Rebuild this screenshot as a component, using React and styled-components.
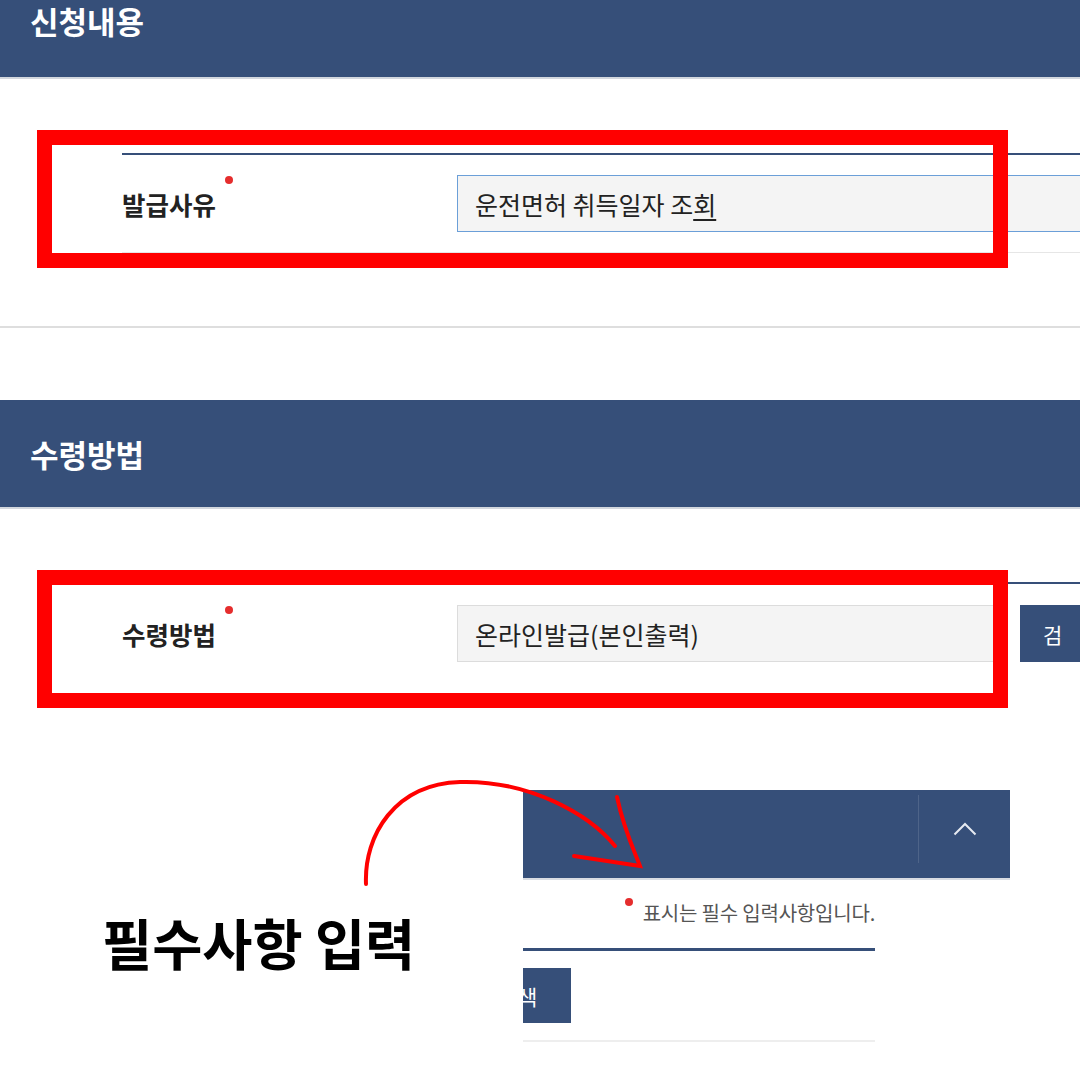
import React from "react";
import styled, { createGlobalStyle } from "styled-components";

const navy = "#364f79";

const GlobalStyle = createGlobalStyle`
  html, body {
    margin: 0;
    padding: 0;
    background: #fff;
    overflow: hidden;
  }
  body {
    font-family: "Noto Sans CJK KR", "Noto Sans", sans-serif;
  }
  * { box-sizing: border-box; }
`;

const Page = styled.div`
  position: relative;
  width: 1080px;
  height: 1080px;
  overflow: hidden;
`;

const Bar = styled.div`
  height: ${(p) => p.$h}px;
  margin-top: ${(p) => p.$mt || 0}px;
  background: ${navy};
  border-bottom: 2px solid #d3d7de;
  box-sizing: content-box;
  padding-left: 30px;
  display: flex;
  align-items: ${(p) => (p.$top ? "flex-start" : "center")};
`;

const Title = styled.h2`
  margin: 0;
  color: #fff;
  font-size: 31px;
  font-weight: 700;
  line-height: 42px;
`;

const Section = styled.section`
  padding: ${(p) => p.$pt}px 0 ${(p) => p.$pb}px 122px;
  border-bottom: ${(p) => (p.$line ? "2px solid #dedede" : "none")};
`;

const Row = styled.div`
  position: relative;
  display: flex;
  align-items: center;
  padding: ${(p) => p.$pt}px 0 ${(p) => p.$pb}px;
  border-top: 2px solid ${navy};
  border-bottom: ${(p) => (p.$bottom ? "1px solid #e6e6e6" : "none")};
`;

const Label = styled.div`
  flex: 0 0 335px;
  display: flex;
  align-items: flex-start;
  font-size: 25.5px;
  font-weight: 700;
  line-height: 30px;
  color: #222;
`;

const Req = styled.span`
  flex: none;
  width: 8px;
  height: 8px;
  border-radius: 50%;
  background: #e52d2d;
  margin: ${(p) => p.$mt}px 0 0 ${(p) => p.$ml}px;
`;

const Field = styled.div`
  flex: none;
  width: ${(p) => p.$w}px;
  height: 57px;
  display: flex;
  align-items: center;
  padding: 0 17px;
  background: #f4f4f4;
  border: 1px solid ${(p) => (p.$focus ? "#6b9fd8" : "#dcdcdc")};
  font-size: 25px;
  color: #222;
  white-space: nowrap;
`;

const Composing = styled.span`
  text-decoration: underline;
  text-decoration-thickness: 2px;
  text-underline-offset: 4px;
`;

const SearchButton = styled.div`
  flex: none;
  margin-left: 15px;
  height: 57px;
  padding: 0 23px;
  display: flex;
  align-items: center;
  background: ${navy};
  color: #fff;
  font-size: 21px;
  letter-spacing: 24px;
  white-space: nowrap;
`;

const RedFrame = styled.div`
  position: absolute;
  left: -85px;
  top: ${(p) => p.$top}px;
  width: 971px;
  height: 138px;
  border: 15px solid #ff0000;
  pointer-events: none;
  z-index: 2;
`;

const BottomArea = styled.div`
  display: grid;
  grid-template-columns: 523px 487px;
  padding-top: 108px;
`;

const Callout = styled.div`
  padding: 122px 0 0 102px;
  font-size: 54.5px;
  font-weight: 700;
  line-height: 60px;
  color: #000;
  white-space: nowrap;
`;

const Clip = styled.div`
  width: 487px;
  height: 255px;
  overflow: hidden;
`;

const ClipInner = styled.div`
  margin-left: -58px;
`;

const MiniBar = styled.div`
  width: 545px;
  height: 88px;
  box-sizing: content-box;
  background: ${navy};
  border-bottom: 2px solid #d9dce2;
  display: flex;
  justify-content: flex-end;
`;

const Toggle = styled.div`
  width: 92px;
  margin: 5px 0 15px;
  border-left: 1px solid rgba(255, 255, 255, 0.12);
  display: flex;
  align-items: center;
  justify-content: center;
`;

const Notice = styled.div`
  width: 410px;
  padding-top: 21px;
  display: flex;
  justify-content: flex-end;
  align-items: flex-start;
  font-size: 20px;
  line-height: 24px;
  letter-spacing: -0.2px;
  color: #555;
`;

const NoticeText = styled.span`
  margin-left: 10px;
`;

const ButtonRow = styled.div`
  width: 410px;
  margin-top: 23px;
  padding: 17px 0;
  border-top: 3px solid ${navy};
  border-bottom: 2px solid #eeeeee;
`;

const MiniButton = styled.div`
  width: 106px;
  height: 55px;
  background: ${navy};
  color: #fff;
  font-size: 21px;
  display: flex;
  align-items: center;
  justify-content: center;
`;

const ArrowLayer = styled.svg`
  position: absolute;
  left: 0;
  top: 0;
  pointer-events: none;
  z-index: 5;
`;

const App = () => {
  return (
    <Page>
      <GlobalStyle />

      <Bar $h={77} $top>
        <Title>신청내용</Title>
      </Bar>
      <Section $pt={74} $pb={73} $line>
        <Row $pt={20} $pb={20} $bottom>
          <RedFrame $top={-25} />
          <Label>
            발급사유
            <Req $mt={-13} $ml={9} />
          </Label>
          <Field $w={700} $focus>
            운전면허 취득일자 조<Composing>회</Composing>
          </Field>
        </Row>
      </Section>

      <Bar $h={107} $mt={72}>
        <Title>수령방법</Title>
      </Bar>
      <Section $pt={73} $pb={0}>
        <Row $pt={21} $pb={20}>
          <RedFrame $top={-14} />
          <Label>
            수령방법
            <Req $mt={-13} $ml={9} />
          </Label>
          <Field $w={548}>온라인발급(본인출력)</Field>
          <SearchButton>검색</SearchButton>
        </Row>
      </Section>

      <BottomArea>
        <Callout>필수사항 입력</Callout>
        <Clip>
          <ClipInner>
            <MiniBar>
              <Toggle>
                <svg width="24" height="14" viewBox="0 0 24 14">
                  <polyline
                    points="1.5,12.5 12,2 22.5,12.5"
                    fill="none"
                    stroke="#e6eaf1"
                    strokeWidth="2"
                  />
                </svg>
              </Toggle>
            </MiniBar>
            <Notice>
              <Req $mt={-3} $ml={0} />
              <NoticeText>표시는 필수 입력사항입니다.</NoticeText>
            </Notice>
            <ButtonRow>
              <MiniButton>검색</MiniButton>
            </ButtonRow>
          </ClipInner>
        </Clip>
      </BottomArea>

      <ArrowLayer width="1080" height="1080" viewBox="0 0 1080 1080">
        <g fill="none" stroke="#ff0000" strokeWidth="4" strokeLinecap="round">
          <path d="M366 884 C 364 835, 395 784, 460 782 C 530 780, 590 815, 615 846" />
          <path d="M617 797 C 624 830, 634 850, 640 866 L 574 856" />
        </g>
      </ArrowLayer>
    </Page>
  );
};

export default App;
